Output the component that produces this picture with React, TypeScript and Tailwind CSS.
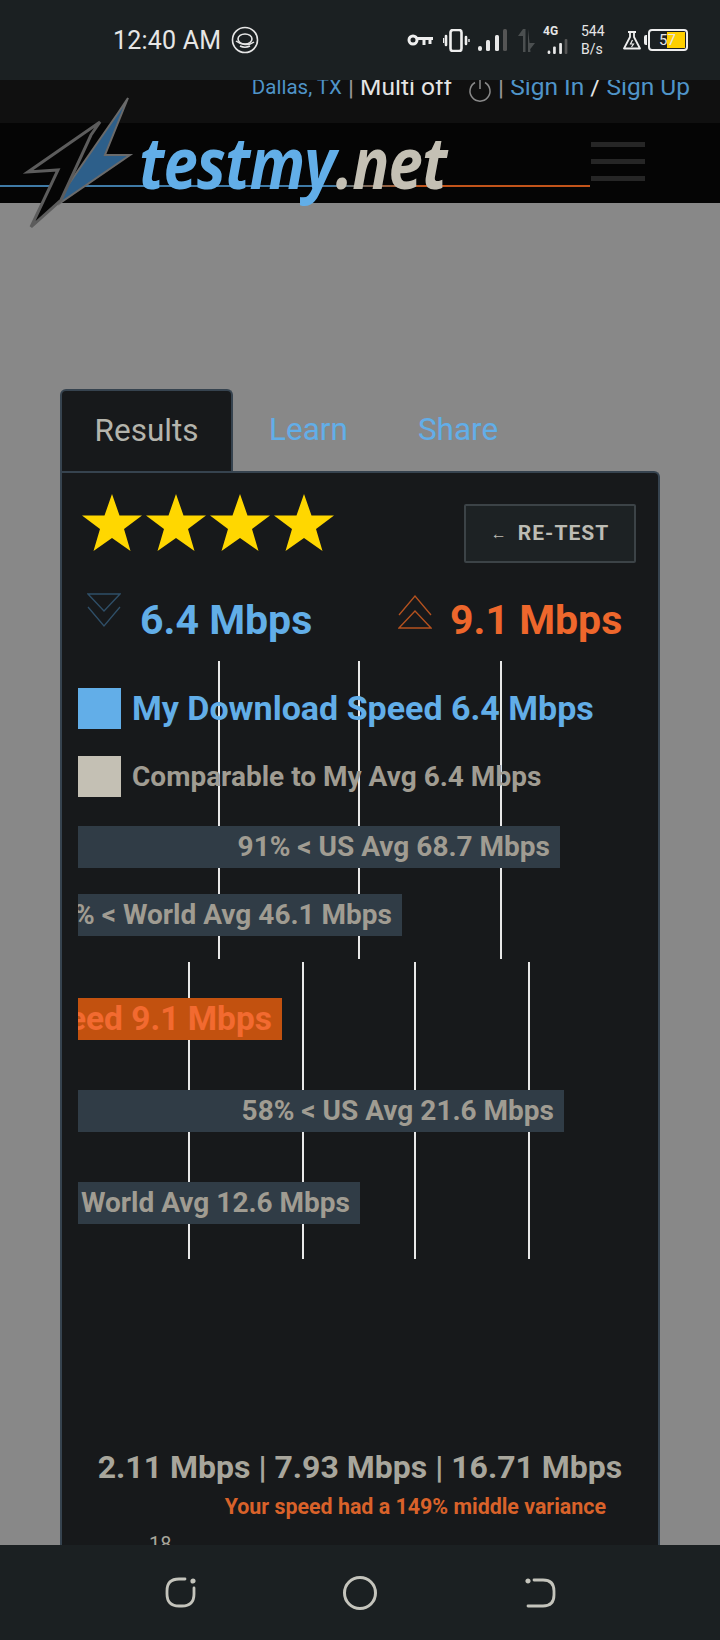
import React from 'react';

const font = "font-['Roboto','Liberation_Sans',sans-serif]";

const SignalBars = ({ className }: { className?: string }) => (
  <svg viewBox="0 0 29 22" className={className} fill="#e8e8e8">
    <rect x="0" y="17" width="4" height="5" rx="2" />
    <rect x="8" y="11" width="4" height="11" rx="1.5" />
    <rect x="17" y="6" width="4" height="16" rx="1.5" />
    <rect x="25" y="0" width="4" height="22" rx="1.5" fill="#555" />
  </svg>
);

const StatusBar = () => (
  <div className="relative z-20 flex h-[80px] shrink-0 items-center bg-[#1b2022] pl-[113px] pr-[32px] text-[#e6e6e6]">
    <span className="text-[25px] leading-none tracking-[0.2px]">12:40 AM</span>
    <svg viewBox="0 0 28 28" className="ml-[10px] h-[28px] w-[28px]" fill="none" stroke="#e6e6e6" strokeWidth="1.6">
      <circle cx="14" cy="14" r="12.5" />
      <ellipse cx="14" cy="13" rx="7" ry="5" />
      <path d="M5 15c5 4 13 5 18 1M9 20c3 1.500 7 1.500 10 0" />
    </svg>
    <div className="ml-auto flex items-center">
      {/* vpn key */}
      <svg viewBox="0 0 26 12" className="h-[12px] w-[26px]" fill="none" stroke="#eee" strokeWidth="3">
        <circle cx="6" cy="6" r="4" />
        <path d="M10 4.500h16M17 5v6M23 5v5" />
      </svg>
      {/* vibrate */}
      <svg viewBox="0 0 27 23" className="ml-[10px] h-[23px] w-[27px]" fill="none" stroke="#eee">
        <rect x="7.500" y="1" width="11" height="21" rx="2.500" strokeWidth="2.600" />
        <path d="M3 7v9M23 8v7" strokeWidth="2.600" strokeLinecap="round" />
        <path d="M0.500 9v5M26 10v3" strokeWidth="1.400" />
      </svg>
      <SignalBars className="ml-[8px] h-[22px] w-[29px]" />
      {/* mobile data arrows */}
      <svg viewBox="0 0 17 23" className="ml-[11px] h-[23px] w-[17px]" fill="#4b4f50">
        <path d="M5 0v23h2.500V0zM5 0L0 7h5zM10 0v23h2.500zM10 23l7-9h-7z" />
      </svg>
      <div className="ml-[8px] flex w-[30px] flex-col items-start">
        <span className="text-[12px] font-bold leading-[11px]">4G</span>
        <SignalBars className="mt-[2px] h-[15px] w-[29px]" />
      </div>
      <div className="ml-[8px] flex w-[26px] flex-col text-[14px] leading-[18px]">
        <span>544</span>
        <span>B/s</span>
      </div>
      {/* battery saver flask */}
      <svg viewBox="0 0 18 19" className="ml-[16px] h-[19px] w-[18px]" fill="none" stroke="#eee" strokeWidth="1.800">
        <path d="M5 1h8M7 1v5L1 17.500h16L11 6V1" strokeLinejoin="round" />
        <path d="M9.500 9l-2 4h3l-2 3" strokeWidth="1.200" />
      </svg>
      <div className="ml-[3px] h-[10px] w-[3px] rounded-l-[2px] bg-[#eee]" />
      <div className="relative ml-[1px] flex h-[22px] w-[40px] items-center rounded-[4px] border-2 border-[#eee] pl-[9px] text-[15px] leading-none">
        <div className="absolute bottom-[1px] right-[1px] top-[1px] w-[18px] bg-[#ffd000]" />
        <span className="relative">57</span>
      </div>
    </div>
  </div>
);

const SiteHeader = () => (
  <header className="relative z-10 shrink-0">
    <div className="flex h-[43px] items-start justify-end overflow-hidden bg-[#101010] pr-[30px] text-[24.5px] leading-none">
      <div className="-mt-[7px] flex items-center whitespace-pre text-[#e4e4e4]">
        <span className="text-[20.5px] text-[#4f94c8]">Dallas, TX</span>
        <span className="text-[#999]"> | </span>
        <span>Multi off</span>
        <svg viewBox="0 0 24 24" className="ml-[16px] mt-[5px] h-[24px] w-[24px]" fill="none" stroke="#8a8a8a" strokeWidth="1.500">
          <path d="M12 2v9M7 4.500a10 10 0 1 0 10 0" />
        </svg>
        <span className="text-[#999]"> | </span>
        <span className="text-[#4f94c8]">Sign In</span>
        <span> / </span>
        <span className="text-[#4f94c8]">Sign Up</span>
      </div>
    </div>
    <div className="relative flex h-[80px] items-start justify-between bg-[#050505]">
      <div className="absolute left-0 top-[62px] h-[2px] w-[590px] bg-[linear-gradient(to_right,#3f7aa6_0%,#3f7aa6_56%,#6a6a64_60%,#c2541a_72%,#c2541a_100%)]" />
      <span className="relative ml-[139px] mt-[-4px] origin-left scale-x-[0.855] whitespace-nowrap text-[72px] font-bold italic leading-[84px] tracking-[-1px] text-[#62aee8] font-['Open_Sans',sans-serif]">
        testmy<span className="text-[#c4c0b4]">.net</span>
      </span>
      <div className="mr-[75px] mt-[19px] flex w-[54px] flex-col gap-[12px]">
        <div className="h-[5px] bg-[#262626]" />
        <div className="h-[5px] bg-[#262626]" />
        <div className="h-[5px] bg-[#262626]" />
      </div>
    </div>
    {/* bolt logo hangs past the bottom of the header */}
    <svg viewBox="0 0 135 150" className="absolute left-[3px] top-[5px] h-[150px] w-[135px]" fill="none">
      <path d="M125 13L102 70h25L57 118l6-15 52-75z" fill="#2d5f8a" stroke="#6a6a6a" strokeWidth="2" />
      <path d="M97 37L25 87l30-2-27 57 30-27 30-65z" fill="#050505" stroke="#5c5c5c" strokeWidth="3" />
    </svg>
  </header>
);

const Star = () => (
  <svg viewBox="0 0 60 57" className="h-[57px] w-[60px]" fill="#ffd700">
    <polygon points="30,0 37.500,21.500 60,21.500 42,35 48.500,57 30,44 11.500,57 18,35 0,21.500 22.500,21.500" />
  </svg>
);

const Chevrons = ({ up, color }: { up?: boolean; color: string }) => (
  <svg viewBox="0 0 34 34" className={`h-[34px] w-[34px] ${up ? 'rotate-180' : ''}`} fill="none" stroke={color} strokeWidth="1.300">
    <path d="M1 1h32L17 18z" />
    <path d="M1 14l16 19 16-19" />
  </svg>
);

const GridLine = ({ className }: { className: string }) => (
  <div className={`absolute inset-y-0 left-0 w-[2px] bg-[#e8e8e8] ${className}`} />
);

const Bar = ({ width, top, text }: { width: string; top: string; text: string }) => (
  <div className={`relative flex h-[42px] items-center justify-end overflow-hidden whitespace-nowrap bg-[#303c46] pr-[10px] text-[28px] font-bold leading-none text-[#a09c92] ${width} ${top}`}>
    <span className="shrink-0">{text}</span>
  </div>
);

const ResultsPanel = () => (
  <section className="flex-1 rounded-tr-[6px] border-x-2 border-t-2 border-[#36434f] bg-[#17191b]">
    <div className="flex items-start justify-between pl-[20px] pr-[22px] pt-[21px]">
      <div className="flex gap-[4px]">
        <Star />
        <Star />
        <Star />
        <Star />
      </div>
      <button className="mt-[10px] flex h-[59px] w-[172px] items-center justify-center gap-[10px] rounded-[2px] border-2 border-[#3c4347] bg-[#1d2224] text-[21px] font-bold tracking-[1px] text-[#bcbcb4]">
        <span className="text-[16px] font-normal">←</span>RE-TEST
      </button>
    </div>

    <div className="mt-[27px] flex h-[71px] items-start pl-[25px]">
      <div className="mr-[19px] mt-[3px]"><Chevrons color="#2f4f68" /></div>
      <span className="mt-[6px] w-[258px] text-[41px] font-bold leading-[48px] text-[#62aee8]">6.4 Mbps</span>
      <div className="mr-[18px] mt-[5px]"><Chevrons up color="#b5521f" /></div>
      <span className="mt-[6px] whitespace-nowrap text-[41px] font-bold leading-[48px] text-[#ee672c]">9.1 Mbps</span>
    </div>

    {/* download chart */}
    <div className="relative ml-[16px] h-[298px] w-[560px] pt-[27px]">
      <GridLine className="ml-[140px]" />
      <GridLine className="ml-[280px]" />
      <GridLine className="ml-[422px]" />
      <div className="relative flex h-[41px] items-center gap-[11px] whitespace-nowrap text-[34px] font-bold leading-none text-[#62aee8]">
        <div className="h-[41px] w-[43px] shrink-0 bg-[#62aee8]" />
        <span className="-mt-[2px]">My Download Speed 6.4 Mbps</span>
      </div>
      <div className="relative mt-[27px] flex h-[41px] items-center gap-[11px] whitespace-nowrap text-[28px] font-bold leading-none text-[#a09c92]">
        <div className="h-[41px] w-[43px] shrink-0 bg-[#c4c0b4]" />
        Comparable to My Avg 6.4 Mbps
      </div>
      <Bar width="w-[482px]" top="mt-[29px]" text="91% < US Avg 68.7 Mbps" />
      <Bar width="w-[324px]" top="mt-[26px]" text="86% < World Avg 46.1 Mbps" />
    </div>

    {/* upload chart */}
    <div className="relative ml-[16px] mt-[3px] h-[297px] w-[560px] pt-[36px]">
      <GridLine className="ml-[110px]" />
      <GridLine className="ml-[224px]" />
      <GridLine className="ml-[336px]" />
      <GridLine className="ml-[450px]" />
      <div className="relative flex h-[42px] w-[204px] items-center justify-end overflow-hidden whitespace-nowrap bg-[#c2510f] pr-[10px] text-[33.5px] font-bold leading-none text-[#f26a30]">
        <span className="shrink-0">My Upload Speed 9.1 Mbps</span>
      </div>
      <Bar width="w-[486px]" top="mt-[50px]" text="58% < US Avg 21.6 Mbps" />
      <Bar width="w-[282px]" top="mt-[50px]" text="28% < World Avg 12.6 Mbps" />
    </div>

    <div className="mt-[188px] text-center text-[32px] font-bold leading-[40px] text-[#a8a69c]">
      2.11 Mbps | 7.93 Mbps | 16.71 Mbps
    </div>
    <div className="mt-[7px] pr-[52px] text-right text-[21.4px] font-bold leading-[26px] text-[#d9622a]">
      Your speed had a 149% middle variance
    </div>
    <div className="ml-[87px] mt-[14px] text-[20px] leading-none text-[#a8a69c]">18</div>
  </section>
);

const BottomNav = () => (
  <nav className="relative z-20 flex h-[95px] shrink-0 items-start bg-[#1b2022] pt-[31px]">
    <svg viewBox="0 0 32 32" className="ml-[165px] h-[32px] w-[32px]" fill="none" stroke="#c4c4bc" strokeWidth="2.800" strokeLinecap="round">
      <path d="M20 3H14Q2 3 2 15v3q0 12 12 12h3q12 0 12-12V12" />
      <circle cx="28" cy="5" r="1.200" fill="#c4c4bc" />
    </svg>
    <div className="ml-[146px] h-[34px] w-[34px] rounded-full border-[3px] border-[#c4c4bc]" />
    <svg viewBox="0 0 32 32" className="ml-[148px] h-[32px] w-[32px]" fill="none" stroke="#c4c4bc" strokeWidth="2.800" strokeLinecap="round">
      <path d="M9 4h9q11 0 11 11v4q0 11-11 11H3" />
      <circle cx="3" cy="5" r="1.200" fill="#c4c4bc" />
    </svg>
  </nav>
);

export default function App() {
  return (
    <div className={`flex h-[1640px] w-[720px] flex-col overflow-hidden bg-[#888888] ${font}`}>
      <StatusBar />
      <SiteHeader />
      <main className="flex min-h-0 flex-1 flex-col overflow-hidden pl-[60px] pr-[60px] pt-[186px]">
        <div className="flex h-[82px] shrink-0 items-stretch text-[31.5px] leading-none">
          <div className="flex w-[173px] items-center justify-center rounded-t-[6px] border-2 border-b-0 border-[#36434f] bg-[#17191b] text-[#b4b4ac]">
            Results
          </div>
          <div className="ml-[36px] flex items-center text-[#62aee8]">Learn</div>
          <div className="ml-[70px] flex items-center text-[#62aee8]">Share</div>
        </div>
        <ResultsPanel />
      </main>
      <BottomNav />
    </div>
  );
}
